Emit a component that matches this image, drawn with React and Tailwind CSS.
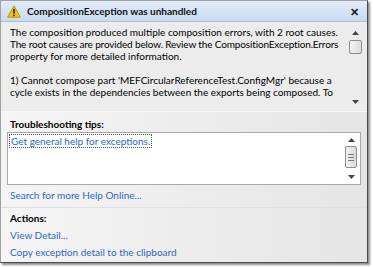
import React from 'react';

function WarningIcon() {
  return (
    <svg width="14" height="13" viewBox="0 0 14 13">
      <path d="M7 0.8 L13.4 12.2 L0.6 12.2 Z" fill="#f5c400" stroke="#b08400" strokeWidth="0.8" strokeLinejoin="round" />
      <rect x="6.2" y="4" width="1.6" height="4.6" fill="#222" />
      <rect x="6.2" y="9.6" width="1.6" height="1.6" fill="#222" />
    </svg>
  );
}

function Arrow({ up }) {
  return (
    <svg width="7" height="4" viewBox="0 0 7 4">
      <path d={up ? 'M3.5 0 L7 4 L0 4 Z' : 'M0 0 L7 0 L3.5 4 Z'} fill="#444" />
    </svg>
  );
}

export default function App() {
  const font = { fontFamily: 'Lato, "Open Sans", sans-serif' };
  return (
    <div className="w-[373px] h-[267px] bg-white" style={font}>
      <div className="w-[368px] h-[263px] border border-[#a0a0a0] border-r-[#4a4a4a] border-b-[#4a4a4a] shadow-[2px_2px_2px_rgba(0,0,0,0.45)] flex flex-col bg-[#efefef] text-[10px] leading-[12px]">
        {/* title */}
        <div className="h-[21px] flex items-center pl-[6px] pr-[5px] bg-gradient-to-b from-[#e2ecf8] to-[#c9daf0] border-b border-[#aebfd6]">
          <WarningIcon />
          <div className="ml-[6px] text-[10px] font-bold text-[#111] flex-1 leading-none">CompositionException was unhandled</div>
          <div className="text-[11px] font-bold text-[#222] leading-none mr-[3px]">✕</div>
        </div>

        {/* message */}
        <div className="h-[90px] flex border-b border-[#f8f8f8] bg-[#ececec]">
          <div className="flex-1 pl-[9px] pt-[4px] text-black whitespace-nowrap">
            <div className="h-[12px]">The composition produced multiple composition errors, with 2 root causes.</div>
            <div className="h-[12px] tracking-[-0.15px]">The root causes are provided below. Review the CompositionException.Errors</div>
            <div className="h-[12px]">property for more detailed information.</div>
            <div className="h-[12px]" />
            <div className="h-[12px]">1) Cannot compose part 'MEFCircularReferenceTest.ConfigMgr' because a</div>
            <div className="h-[12px]">cycle exists in the dependencies between the exports being composed. To</div>
          </div>
          <div className="w-[16px] mr-[4px] mt-[4px] mb-[2px] flex flex-col items-center">
            <div className="h-[14px] flex items-center"><Arrow up /></div>
            <div className="w-[13px] h-[14px] border border-[#8e8e8e] rounded-[2px] bg-gradient-to-r from-[#f4f4f4] to-[#dcdcdc]" />
            <div className="flex-1" />
            <div className="h-[14px] flex items-center"><Arrow /></div>
          </div>
        </div>

        {/* lower */}
        <div className="flex-1 bg-gradient-to-r from-[#f5f5f5] to-[#e5e5e5] px-[6px] pt-[6px]">
          <div className="pl-[3px] font-bold text-black">Troubleshooting tips:</div>
          <div className="mt-[2px] h-[53px] bg-white border border-[#a9a9a9] flex">
            <div className="flex-1 pt-[1px] pl-[1px]">
              <span className="inline-block text-[#2a68c8] border border-dotted border-[#555] px-[1px]">Get general help for exceptions.</span>
            </div>
            <div className="w-[14px] mr-[2px] flex flex-col items-center py-[1px]">
              <div className="h-[12px] flex items-center"><Arrow up /></div>
              <div className="w-[12px] h-[22px] border border-[#8e8e8e] rounded-[2px] bg-gradient-to-r from-[#f4f4f4] to-[#d8d8d8] flex flex-col items-center justify-center gap-[2px]">
                <div className="w-[6px] h-px bg-[#777]" />
                <div className="w-[6px] h-px bg-[#777]" />
                <div className="w-[6px] h-px bg-[#777]" />
              </div>
              <div className="flex-1" />
              <div className="h-[12px] flex items-center"><Arrow /></div>
            </div>
          </div>
          <div className="pl-[3px] mt-[4px] text-[#2a68c8]">Search for more Help Online...</div>
          <div className="mt-[6px] -mx-[6px] h-px bg-[#f9f9f9] border-t border-[#e0e0e0]" />
          <div className="pl-[3px] mt-[4px] font-bold text-black">Actions:</div>
          <div className="pl-[3px] mt-[5px] text-[#2a68c8]">View Detail...</div>
          <div className="pl-[3px] mt-[5px] text-[#2a68c8]">Copy exception detail to the clipboard</div>
        </div>
      </div>
    </div>
  );
}
